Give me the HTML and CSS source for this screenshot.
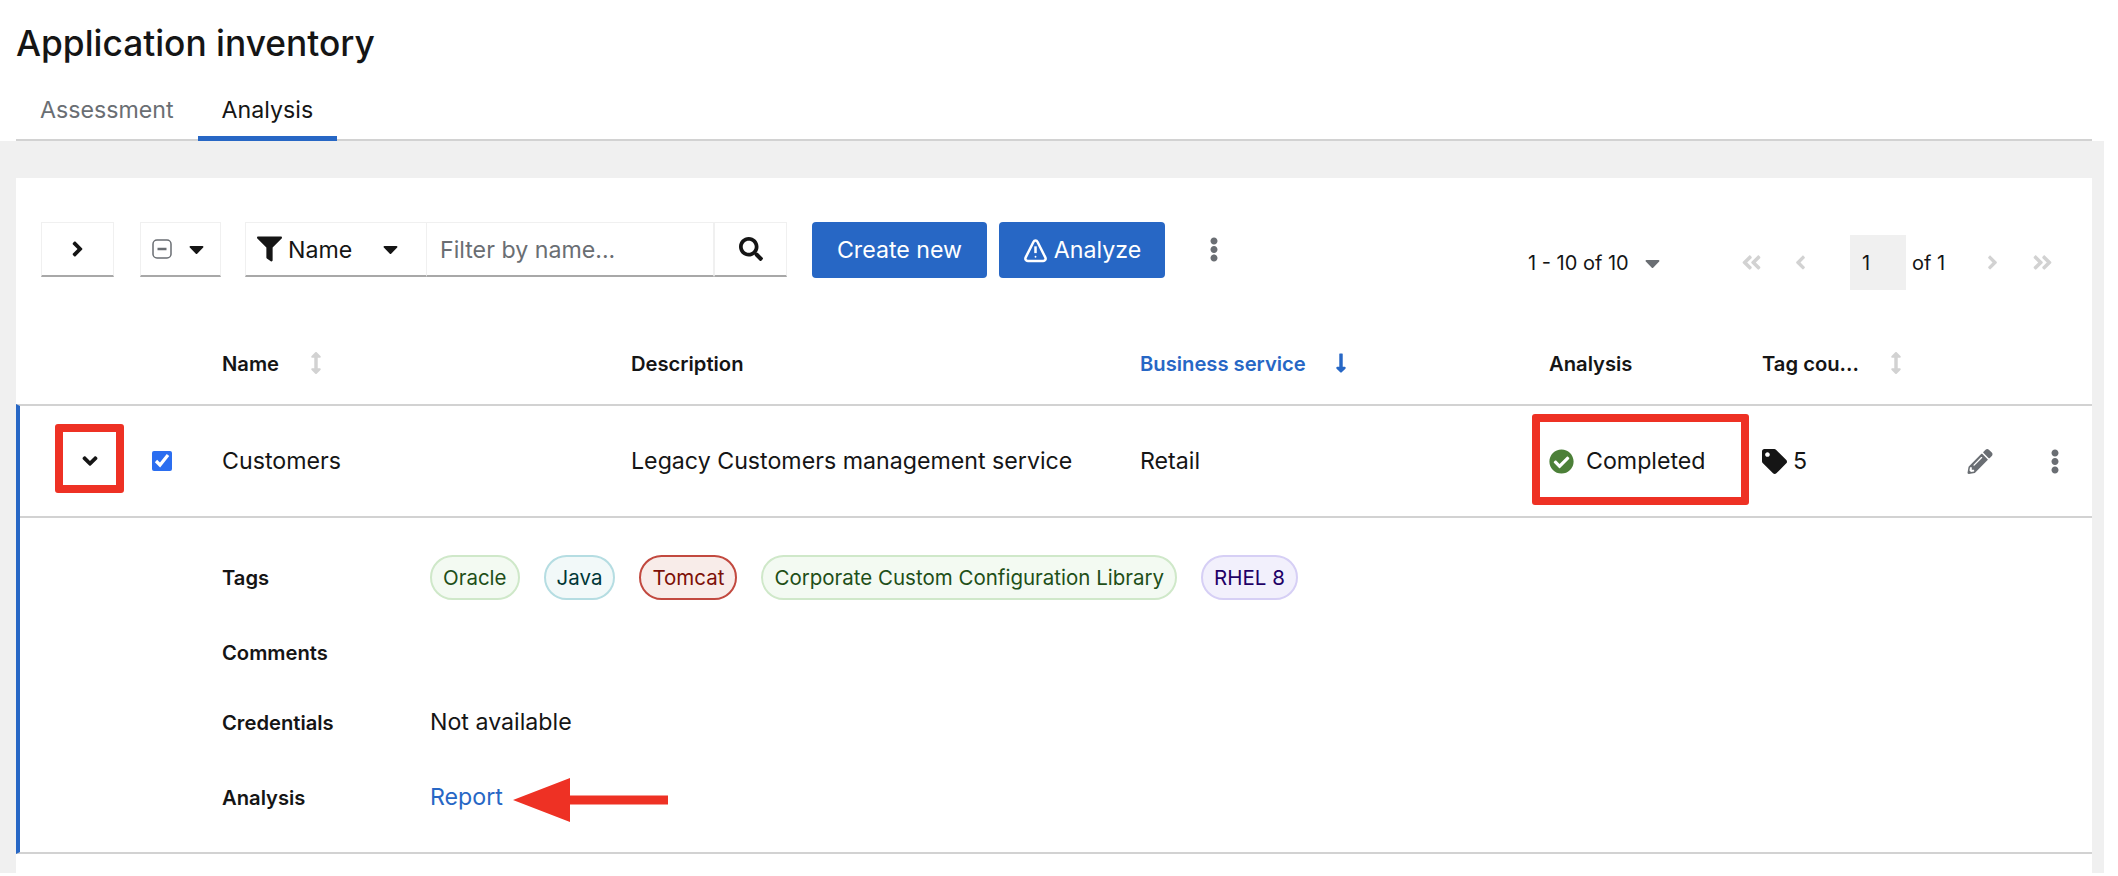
FILE: index.html
```html
<!DOCTYPE html>
<html lang="en">

<head>
    <meta charset="UTF-8">
    <title>Application inventory</title>
    <link rel="stylesheet" href="styles.css">
</head>

<body>
    <svg class="icon-defs" aria-hidden="true">
        <symbol id="i-angle-right" viewBox="0 0 256 512"><path d="M224.3 273l-136 136c-9.4 9.4-24.6 9.4-33.9 0l-22.6-22.6c-9.4-9.4-9.4-24.6 0-33.9l96.4-96.4-96.4-96.4c-9.4-9.4-9.4-24.6 0-33.9L54.3 103c9.4-9.4 24.6-9.4 33.9 0l136 136c9.5 9.4 9.5 24.6.1 34z"/></symbol>
        <symbol id="i-angle-down" viewBox="0 0 320 512"><path d="M143 352.3L7 216.3c-9.4-9.4-9.4-24.6 0-33.9l22.6-22.6c9.4-9.4 24.6-9.4 33.9 0l96.4 96.4 96.4-96.4c9.4-9.4 24.6-9.4 33.9 0l22.6 22.6c9.4 9.4 9.4 24.6 0 33.9l-136 136c-9.2 9.4-24.4 9.4-33.8 0z"/></symbol>
        <symbol id="i-caret" viewBox="0 0 320 512"><path d="M31.3 192h257.3c17.8 0 26.7 21.5 14.1 34.1L174.1 354.8c-7.8 7.8-20.5 7.8-28.3 0L17.2 226.1C4.6 213.5 13.5 192 31.3 192z"/></symbol>
        <symbol id="i-filter" viewBox="0 0 512 512"><path d="M487.976 0H24.028C2.71 0-8.047 25.866 7.058 40.971L192 225.941V432c0 7.831 3.821 15.17 10.237 19.662l80 55.98C298.02 518.69 320 507.493 320 487.98V225.941l184.947-184.97C520.021 25.896 509.338 0 487.976 0z"/></symbol>
        <symbol id="i-search" viewBox="0 0 512 512"><path d="M505 442.7L405.3 343c-4.5-4.5-10.6-7-17-7H372c27.6-35.3 44-79.7 44-128C416 93.1 322.9 0 208 0S0 93.1 0 208s93.1 208 208 208c48.3 0 92.7-16.4 128-44v16.3c0 6.4 2.5 12.5 7 17l99.7 99.7c9.4 9.4 24.6 9.4 33.9 0l28.3-28.3c9.4-9.4 9.4-24.6.1-34zM208 336c-70.7 0-128-57.2-128-128 0-70.7 57.2-128 128-128 70.7 0 128 57.2 128 128 0 70.7-57.2 128-128 128z"/></symbol>
        <symbol id="i-kebab" viewBox="0 0 192 512"><path d="M96 184c39.8 0 72 32.2 72 72s-32.2 72-72 72-72-32.2-72-72 32.2-72 72-72zM24 80c0 39.8 32.2 72 72 72s72-32.2 72-72S135.8 8 96 8 24 40.2 24 80zm0 352c0 39.8 32.2 72 72 72s72-32.2 72-72-32.2-72-72-72-72 32.2-72 72z"/></symbol>
        <symbol id="i-check" viewBox="0 0 512 512"><path d="M504 256c0 136.967-111.033 248-248 248S8 392.967 8 256 119.033 8 256 8s248 111.033 248 248zM227.314 387.314l184-184c6.248-6.248 6.248-16.379 0-22.627l-22.627-22.627c-6.248-6.249-16.379-6.249-22.628 0L216 308.118l-70.059-70.059c-6.248-6.248-16.379-6.248-22.628 0l-22.627 22.627c-6.248 6.248-6.248 16.379 0 22.627l104 104c6.249 6.249 16.379 6.249 22.628.001z"/></symbol>
        <symbol id="i-tag" viewBox="0 0 512 512"><path d="M0 252.118V48C0 21.49 21.49 0 48 0h204.118a48 48 0 0 1 33.941 14.059l211.882 211.882c18.745 18.745 18.745 49.137 0 67.882L293.823 497.941c-18.745 18.745-49.137 18.745-67.882 0L14.059 286.059A48 48 0 0 1 0 252.118zM112 64c-26.51 0-48 21.49-48 48s21.49 48 48 48 48-21.49 48-48-21.49-48-48-48z"/></symbol>
        <symbol id="i-pencil" viewBox="0 0 512 512"><path d="M497.9 142.1l-46.1 46.1c-4.7 4.7-12.3 4.7-17 0l-111-111c-4.7-4.7-4.7-12.3 0-17l46.1-46.1c18.7-18.7 49.1-18.7 67.9 0l60.1 60.1c18.8 18.7 18.8 49.1 0 67.9zM284.2 99.8L21.6 362.4.4 483.9c-2.9 16.4 11.4 30.6 27.8 27.8l121.5-21.3 262.6-262.6c4.7-4.7 4.7-12.3 0-17l-111-111c-4.8-4.7-12.4-4.7-17.1 0zM124.1 339.9c-5.5-5.5-5.5-14.3 0-19.8l154-154c5.5-5.5 14.3-5.5 19.8 0s5.5 14.3 0 19.8l-154 154c-5.5 5.5-14.3 5.5-19.8 0zM88 424h48v36.3l-64.5 11.3-31.1-31.1L51.7 376H88v48z"/></symbol>
        <symbol id="i-double" viewBox="0 0 448 512"><path d="M223.7 239l136-136c9.4-9.4 24.6-9.4 33.9 0l22.6 22.6c9.4 9.4 9.4 24.6 0 33.9L319.9 256l96.4 96.4c9.4 9.4 9.4 24.6 0 33.9L393.7 409c-9.4 9.4-24.6 9.4-33.9 0l-136-136c-9.5-9.4-9.5-24.6-.1-34zm-192 34l136 136c9.4 9.4 24.6 9.4 33.9 0l22.6-22.6c9.4-9.4 9.4-24.6 0-33.9L127.9 256l96.4-96.4c9.4-9.4 9.4-24.6 0-33.9L201.7 103c-9.4-9.4-24.6-9.4-33.9 0l-136 136c-9.5 9.4-9.5 24.6-.1 34z"/></symbol>
        <symbol id="i-sort" viewBox="0 0 256 512"><path d="M214.059 377.941H168V134.059h46.059c21.382 0 32.09-25.851 16.971-40.971L144.971 7.029c-9.373-9.373-24.568-9.373-33.941 0L24.971 93.088c-15.119 15.119-4.411 40.971 16.971 40.971H88v243.882H41.941c-21.382 0-32.09 25.851-16.971 40.971l86.059 86.059c9.373 9.373 24.568 9.373 33.941 0l86.059-86.059c15.12-15.119 4.412-40.971-16.97-40.971z"/></symbol>
        <symbol id="i-arrow-down" viewBox="0 0 256 512"><path d="M168 345.941V44c0-6.627-5.373-12-12-12h-56c-6.627 0-12 5.373-12 12v301.941H41.941c-21.382 0-32.09 25.851-16.971 40.971l86.059 86.059c9.373 9.373 24.568 9.373 33.941 0l86.059-86.059c15.119-15.119 4.411-40.971-16.971-40.971H168z"/></symbol>
    </svg>

    <header class="page-head">
        <h1 class="page-title">Application inventory</h1>
        <nav class="tabs">
            <a class="tab">Assessment</a>
            <a class="tab tab-active">Analysis</a>
        </nav>
    </header>

    <main class="page-main">
        <section class="card">
            <div class="toolbar">
                <button class="tool-btn tool-expand"><svg class="icon-angle"><use href="#i-angle-right"/></svg></button>
                <button class="tool-btn tool-select">
                    <svg class="icon-minus" viewBox="0 0 20 20"><rect x="1" y="1" width="18" height="18" rx="4"/><line x1="5.5" y1="10" x2="14.5" y2="10"/></svg>
                    <svg class="icon-caret"><use href="#i-caret"/></svg>
                </button>
                <div class="filter-group">
                    <button class="tool-btn tool-filter">
                        <svg class="icon-filter"><use href="#i-filter"/></svg>
                        <span class="filter-label">Name</span>
                        <svg class="icon-caret"><use href="#i-caret"/></svg>
                    </button>
                    <input class="filter-input" type="text" placeholder="Filter by name...">
                    <button class="tool-btn tool-search"><svg class="icon-search"><use href="#i-search"/></svg></button>
                </div>
                <button class="btn-primary btn-create">Create new</button>
                <button class="btn-primary btn-analyze">
                    <svg class="icon-warn" viewBox="0 0 24 24"><path d="M12 2.5c-.9 0-1.6.5-2 1.3L2.6 18.6c-.9 1.8.3 3.4 2 3.4h14.8c1.7 0 2.9-1.6 2-3.4L14 3.8c-.4-.8-1.1-1.3-2-1.3z"/><line x1="12" y1="8" x2="12" y2="14.5"/><circle cx="12" cy="18" r="0.9"/></svg>
                    <span>Analyze</span>
                </button>
                <svg class="icon-kebab tool-kebab"><use href="#i-kebab"/></svg>

                <div class="pagination">
                    <span class="page-count">1 - 10 of 10</span>
                    <svg class="icon-caret page-caret"><use href="#i-caret"/></svg>
                    <svg class="page-icon page-first"><use href="#i-double"/></svg>
                    <svg class="page-icon page-prev"><use href="#i-angle-right"/></svg>
                    <span class="page-input">1</span>
                    <span class="page-of">of 1</span>
                    <svg class="page-icon page-next"><use href="#i-angle-right"/></svg>
                    <svg class="page-icon page-last"><use href="#i-double"/></svg>
                </div>
            </div>

            <div class="table-head">
                <div class="head-cell head-name">Name <svg class="icon-sort sort-name"><use href="#i-sort"/></svg></div>
                <div class="head-cell head-desc">Description</div>
                <div class="head-cell head-sorted">Business service <svg class="icon-sort sort-active"><use href="#i-arrow-down"/></svg></div>
                <div class="head-cell head-analysis">Analysis</div>
                <div class="head-cell">Tag cou... <svg class="icon-sort sort-tag"><use href="#i-sort"/></svg></div>
            </div>

            <div class="expanded">
                <div class="table-row">
                    <div class="cell cell-controls">
                        <span class="expand-toggle">
                            <svg class="icon-down"><use href="#i-angle-down"/></svg>
                            <span class="callout callout-toggle"></span>
                        </span>
                        <input class="row-check" type="checkbox" checked>
                    </div>
                    <div class="cell">Customers</div>
                    <div class="cell">Legacy Customers management service</div>
                    <div class="cell">Retail</div>
                    <div class="cell cell-status">
                        <svg class="icon-status"><use href="#i-check"/></svg>
                        <span>Completed</span>
                        <span class="callout callout-status"></span>
                    </div>
                    <div class="cell cell-tags">
                        <svg class="icon-tag"><use href="#i-tag"/></svg>
                        <span>5</span>
                    </div>
                    <div class="cell cell-actions">
                        <svg class="icon-pencil"><use href="#i-pencil"/></svg>
                        <svg class="icon-kebab"><use href="#i-kebab"/></svg>
                    </div>
                </div>

                <dl class="details">
                    <dt>Tags</dt>
                    <dd class="chips">
                        <span class="chip chip-green">Oracle</span>
                        <span class="chip chip-cyan">Java</span>
                        <span class="chip chip-red">Tomcat</span>
                        <span class="chip chip-green">Corporate Custom Configuration Library</span>
                        <span class="chip chip-purple">RHEL 8</span>
                    </dd>
                    <dt>Comments</dt>
                    <dd></dd>
                    <dt>Credentials</dt>
                    <dd>Not available</dd>
                    <dt>Analysis</dt>
                    <dd class="report-cell">
                        <a class="report-link">Report</a>
                        <svg class="callout-arrow" viewBox="0 0 155 44"><path d="M0 22 57 0V17.5H155V26.5H57V44Z"/></svg>
                    </dd>
                </dl>
            </div>
        </section>
    </main>
</body>

</html>
```

FILE: styles.css
```css
* {
    box-sizing: border-box;
}

html,
body {
    height: 100%;
}

body {
    margin: 0;
    overflow: hidden;
    background-color: #ffffff;
    color: #151515;
    font-family: Inter, "Liberation Sans", sans-serif;
    font-size: 23.2px;
}

svg {
    fill: currentColor;
    flex: none;
}

.icon-defs {
    display: none;
}

/* page header */
.page-head {
    height: 141px;
    padding: 0 26px 0 16px;
    display: flex;
    flex-direction: column;
}

.page-title {
    margin: 21px 0 0;
    font-size: 35.3px;
    line-height: 46px;
    font-weight: 500;
}

.tabs {
    margin-top: auto;
    display: flex;
    border-bottom: 2px solid #d2d2d2;
}

.tab {
    height: 62px;
    padding: 17px 24px 0;
    margin-bottom: -2px;
    color: #6a6e73;
}

.tab-active {
    color: #151515;
    border-bottom: 5px solid #2767c5;
}

/* grey area and card */
.page-main {
    width: 2104px;
    height: 732px;
    padding: 37px 12px 0 16px;
    background-color: #f0f0f0;
}

.card {
    height: 100%;
    background-color: #ffffff;
}

/* toolbar */
.toolbar {
    display: flex;
    align-items: flex-start;
    height: 99px;
    padding: 44px 0 0 25px;
}

.tool-btn {
    height: 55px;
    display: flex;
    align-items: center;
    justify-content: center;
    background-color: #ffffff;
    border: 1px solid #f0f0f0;
    border-bottom: 2px solid #a8a8a8;
    color: #151515;
    font-family: inherit;
    font-size: inherit;
    padding: 0;
}

.tool-expand {
    width: 73px;
}

.tool-select {
    width: 81px;
    margin-left: 26px;
    padding-left: 11px;
    justify-content: flex-start;
    gap: 17px;
}

.filter-group {
    display: flex;
    margin-left: 24px;
}

.tool-filter {
    width: 182px;
    padding-left: 11px;
    justify-content: flex-start;
    gap: 6px;
}

.tool-filter .icon-caret {
    margin-left: 25px;
}

.filter-label {
    margin-top: 2px;
}

.filter-input {
    width: 287px;
    height: 55px;
    padding: 2px 13px 0;
    border: 1px solid #f0f0f0;
    border-left: 0;
    border-bottom: 2px solid #a8a8a8;
    border-radius: 0;
    font-family: inherit;
    font-size: inherit;
    outline: none;
}

.filter-input::placeholder {
    color: #6a6e73;
    opacity: 1;
}

.tool-search {
    width: 73px;
}

.btn-primary {
    height: 56px;
    border: none;
    border-radius: 4px;
    background-color: #2767c5;
    color: #ffffff;
    font-family: inherit;
    font-size: inherit;
    display: flex;
    align-items: center;
    justify-content: center;
}

.btn-create {
    width: 175px;
    margin-left: 25px;
}

.btn-analyze {
    width: 166px;
    margin-left: 12px;
    gap: 6px;
}

.tool-kebab {
    margin: 15px 0 0 44px;
}

.pagination {
    margin: 13px 0 0 auto;
    width: 564px;
    height: 55px;
    display: flex;
    align-items: center;
    font-size: 20px;
    white-space: nowrap;
}

.page-count {
    width: 100px;
}

.page-caret {
    margin-left: 17px;
    color: #6a6e73;
}

.page-icon {
    color: #d2d2d2;
    height: 23px;
}

.page-first {
    width: 23px;
    margin-left: 80px;
}

.page-prev {
    width: 11px;
    margin-left: 32px;
    transform: scaleX(-1);
}

.page-input {
    width: 56px;
    height: 55px;
    margin: -1px 0 0 44px;
    padding-left: 12px;
    line-height: 56px;
    background-color: #f0f0f0;
}

.page-of {
    margin-left: 6px;
    width: 32px;
}

.page-next {
    width: 11px;
    margin-left: 43px;
}

.page-last {
    width: 23px;
    margin-left: 33px;
    transform: scaleX(-1);
}

/* icon sizes */
.icon-angle {
    width: 13px;
    height: 24px;
}

.icon-down {
    width: 16px;
    height: 24px;
}

.icon-caret {
    width: 15px;
    height: 24px;
}

.icon-minus {
    width: 20px;
    height: 20px;
    fill: none;
    stroke: #6a6e73;
    stroke-width: 1.5;
}

.icon-minus line {
    stroke-width: 2.5;
}

.icon-filter {
    width: 25px;
    height: 26px;
}

.icon-search {
    width: 24px;
    height: 24px;
}

.icon-warn {
    width: 25px;
    height: 25px;
    fill: none;
    stroke: #ffffff;
    stroke-width: 2.4;
}

.icon-warn circle {
    fill: #ffffff;
    stroke: none;
}

.icon-kebab {
    width: 10px;
    height: 25px;
    color: #6a6e73;
}

.icon-sort {
    width: 12px;
    height: 22px;
    color: #d2d2d2;
}

/* table */
.table-head {
    display: grid;
    grid-template-columns: 409px 509px 409px 213px 330px;
    align-items: center;
    height: 82px;
    margin-top: 45px;
    padding-left: 206px;
    font-size: 20.2px;
    font-weight: 600;
}

.head-cell {
    display: flex;
    align-items: center;
    white-space: nowrap;
}

.sort-name {
    margin-left: 31px;
}

.head-sorted {
    color: #2767c5;
}

.sort-active {
    margin-left: 29px;
    color: #2767c5;
}

.sort-tag {
    margin-left: 31px;
}

.expanded {
    border-top: 2px solid #d2d2d2;
    border-left: 4px solid #2767c5;
    border-bottom: 2px solid #d2d2d2;
}

.table-row {
    display: grid;
    grid-template-columns: 202px 409px 509px 409px 213px 188px 142px;
    align-items: center;
    height: 112px;
    border-bottom: 2px solid #d2d2d2;
}

.cell {
    white-space: nowrap;
    display: flex;
    align-items: center;
}

.cell-controls {
    height: 100%;
}

.expand-toggle {
    position: relative;
    margin-left: 62px;
    display: flex;
}

.row-check {
    width: 20px;
    height: 20px;
    margin: 0 0 0 54px;
    accent-color: #2b6ef0;
}

.callout {
    position: absolute;
    border: 8px solid #ee3124;
    border-radius: 3px;
}

.callout-toggle {
    left: -27px;
    top: -25px;
    width: 69px;
    height: 69px;
}

.cell-status {
    position: relative;
    gap: 12px;
}

.icon-status {
    width: 25px;
    height: 25px;
    color: #4c8038;
}

.callout-status {
    left: -17px;
    top: -33px;
    width: 217px;
    height: 91px;
}

.cell-tags {
    gap: 6px;
}

.icon-tag {
    width: 25px;
    height: 25px;
}

.cell-actions {
    gap: 57px;
    padding-left: 17px;
}

.icon-pencil {
    width: 26px;
    height: 25px;
    color: #6a6e73;
}

/* expanded details */
.details {
    margin: 0;
    padding: 37px 0 30px 202px;
    display: grid;
    grid-template-columns: 208px 1fr;
    grid-template-rows: 45px 40px 36px 50px;
    row-gap: 32px;
    align-items: center;
}

.details dt {
    font-size: 20.2px;
    font-weight: 600;
}

.details dd {
    margin: 0;
}

.chips {
    display: flex;
    gap: 24px;
}

.chip {
    height: 45px;
    line-height: 41px;
    padding: 0 11px;
    border: 2px solid;
    border-radius: 23px;
    font-size: 20.5px;
}

.chip-green {
    background-color: #f3faf2;
    border-color: #cfe8c9;
    color: #1e4f18;
}

.chip-cyan {
    background-color: #f2f9f9;
    border-color: #b5dde2;
    color: #003737;
}

.chip-red {
    background-color: #f8ece9;
    border-color: #c2493f;
    color: #7d1007;
}

.chip-purple {
    background-color: #f2f0fc;
    border-color: #d6cff5;
    color: #1f0066;
}

.report-cell {
    display: flex;
    align-items: center;
    position: relative;
}

.report-link {
    color: #2767c5;
}

.callout-arrow {
    position: absolute;
    left: 83px;
    top: -5px;
    width: 155px;
    height: 44px;
    fill: #ee3124;
}
```
